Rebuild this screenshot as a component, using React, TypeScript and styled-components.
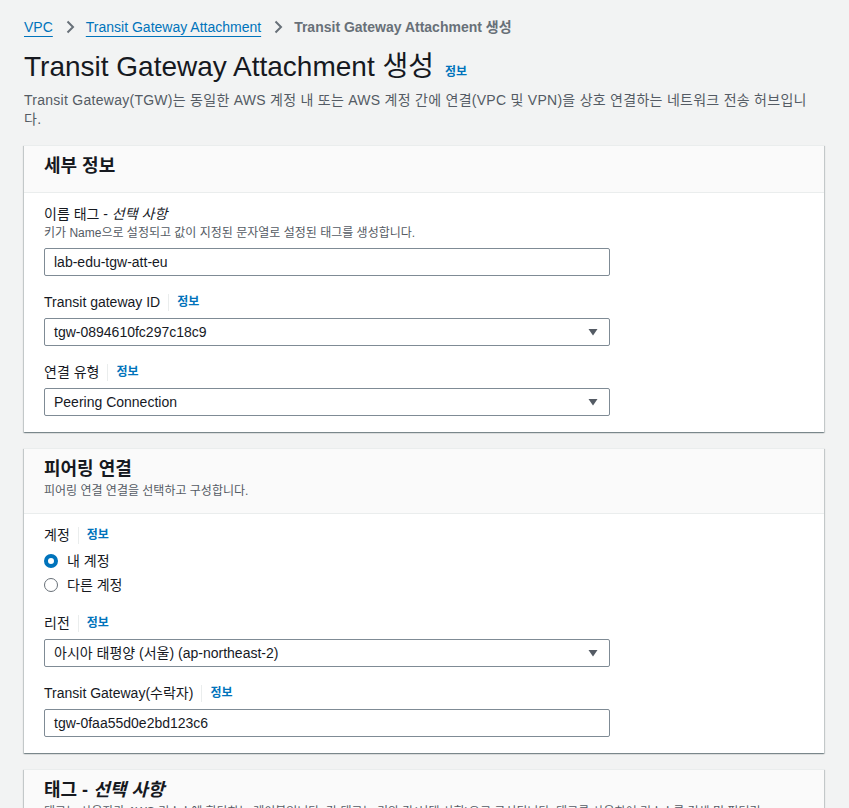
import React from "react";
import styled, { createGlobalStyle } from "styled-components";

const GlobalStyle = createGlobalStyle`
  html, body {
    margin: 0;
    padding: 0;
    background: #f2f3f3;
  }
  body {
    font-family: "Liberation Sans", "Noto Sans CJK KR", sans-serif;
    color: #16191f;
    font-size: 14px;
    line-height: 20px;
  }
  * { box-sizing: border-box; }
`;

const Page = styled.div`
  padding: 17px 25px 40px 24px;
`;

const Breadcrumbs = styled.nav`
  display: flex;
  align-items: center;
  height: 20px;
  font-size: 14px;
`;

const Crumb = styled.a`
  color: #0073bb;
  text-decoration: underline;
  text-underline-offset: 4px;
  text-decoration-thickness: 1px;
`;

const CurrentCrumb = styled.span`
  color: #687078;
  font-weight: 700;
`;

const Chevron = styled.svg`
  width: 16px;
  height: 16px;
  margin: 0 8px 0 9px;
  flex: none;
`;

const TitleRow = styled.div`
  display: flex;
  align-items: baseline;
  margin-top: 12px;
`;

const Title = styled.h1`
  margin: 0;
  font-size: 28px;
  line-height: 36px;
  font-weight: 400;
`;

const InfoLink = styled.a`
  color: #0073bb;
  font-size: 12px;
  font-weight: 700;
  line-height: 16px;
  text-decoration: none;
`;

const TitleInfo = styled(InfoLink)`
  margin-left: 11px;
`;

const Description = styled.p`
  margin: 6px 0 0;
  max-width: 788px;
  color: #545b64;
  font-size: 14px;
  line-height: 19px;
  letter-spacing: 0.27px;
`;

const Stack = styled.div`
  display: flex;
  flex-direction: column;
  gap: 16px;
  margin-top: 16px;
`;

const Container = styled.section`
  background: #ffffff;
  box-shadow: 0 1px 1px 0 rgba(0, 28, 36, 0.3), 1px 1px 1px 0 rgba(0, 28, 36, 0.15),
    -1px 1px 1px 0 rgba(0, 28, 36, 0.15);
  border-top: 1px solid #eaeded;
`;

const Header = styled.div`
  background: #fafafa;
  border-bottom: 1px solid #eaeded;
  padding: 8px 20px 14px;
`;

const HeaderTitle = styled.h2`
  margin: 0;
  font-size: 18px;
  line-height: 24px;
  font-weight: 700;
`;

const HeaderDesc = styled.p`
  margin: 2px 0 0;
  font-size: 12px;
  line-height: 16px;
  color: #545b64;
  white-space: nowrap;
  overflow: hidden;
`;

const Body = styled.div`
  padding: 11px 20px 16px;
  display: flex;
  flex-direction: column;
  gap: 16px;
`;

const Field = styled.div`
  display: flex;
  flex-direction: column;
`;

const LabelRow = styled.div`
  display: flex;
  align-items: center;
  height: 20px;
`;

const Label = styled.label`
  font-size: 14px;
  line-height: 20px;
  color: #16191f;
`;

const Divider = styled.span`
  width: 1px;
  height: 17px;
  background: #eaeded;
  margin: 0 8px;
`;

const FieldDesc = styled.div`
  font-size: 12px;
  line-height: 16px;
  color: #545b64;
  margin-top: 1px;
`;

const Control = styled.div<{ $gap?: number }>`
  margin-top: ${(p) => p.$gap ?? 6}px;
  width: 566px;
  height: 28px;
  border: 1px solid #7f8b95;
  border-radius: 2px;
  background: #ffffff;
  display: flex;
  align-items: center;
  padding: 0 8px 0 9px;
  font-size: 14px;
  color: #16191f;
`;

const ControlText = styled.span`
  flex: 1;
  white-space: nowrap;
`;

const Caret = styled.svg`
  width: 16px;
  height: 16px;
  flex: none;
`;

const RadioGroup = styled.div`
  display: flex;
  flex-direction: column;
  margin-top: 4px;
`;

const RadioRow = styled.div`
  display: flex;
  align-items: center;
  height: 24px;
  gap: 9px;
`;

const RadioDot = styled.span<{ $checked?: boolean }>`
  width: 14px;
  height: 14px;
  border-radius: 50%;
  flex: none;
  background: #ffffff;
  border: ${(p) => (p.$checked ? "4px solid #0073bb" : "1.5px solid #687078")};
`;

const Italic = styled.i`
  font-style: italic;
`;

const InfoLabel: React.FC<{ label: React.ReactNode }> = ({ label }) => (
  <LabelRow>
    <Label>{label}</Label>
    <Divider />
    <InfoLink href="#">정보</InfoLink>
  </LabelRow>
);

const SelectBox: React.FC<{ value: string }> = ({ value }) => (
  <Control>
    <ControlText>{value}</ControlText>
    <Caret viewBox="0 0 16 16">
      <path d="M3.5 5h9L8 11.5z" fill="#545b64" />
    </Caret>
  </Control>
);

const ChevronIcon = () => (
  <Chevron viewBox="0 0 16 16">
    <path d="M5.5 2.5l5.5 5.5-5.5 5.5" fill="none" stroke="#687078" strokeWidth="2" />
  </Chevron>
);

export default function App() {
  return (
    <>
      <GlobalStyle />
      <Page>
        <Breadcrumbs>
          <Crumb href="#">VPC</Crumb>
          <ChevronIcon />
          <Crumb href="#">Transit Gateway Attachment</Crumb>
          <ChevronIcon />
          <CurrentCrumb>Transit Gateway Attachment 생성</CurrentCrumb>
        </Breadcrumbs>

        <TitleRow>
          <Title>Transit Gateway Attachment 생성</Title>
          <TitleInfo href="#">정보</TitleInfo>
        </TitleRow>
        <Description>
          Transit Gateway(TGW)는 동일한 AWS 계정 내 또는 AWS 계정 간에 연결(VPC 및 VPN)을 상호 연결하는 네트워크 전송 허브입니다.
        </Description>

        <Stack>
          <Container>
            <Header>
              <HeaderTitle>세부 정보</HeaderTitle>
            </Header>
            <Body>
              <Field>
                <LabelRow>
                  <Label>
                    이름 태그 - <Italic>선택 사항</Italic>
                  </Label>
                </LabelRow>
                <FieldDesc>키가 Name으로 설정되고 값이 지정된 문자열로 설정된 태그를 생성합니다.</FieldDesc>
                <Control $gap={7}>
                  <ControlText>lab-edu-tgw-att-eu</ControlText>
                </Control>
              </Field>
              <Field>
                <InfoLabel label="Transit gateway ID" />
                <SelectBox value="tgw-0894610fc297c18c9" />
              </Field>
              <Field>
                <InfoLabel label="연결 유형" />
                <SelectBox value="Peering Connection" />
              </Field>
            </Body>
          </Container>

          <Container>
            <Header>
              <HeaderTitle>피어링 연결</HeaderTitle>
              <HeaderDesc>피어링 연결 연결을 선택하고 구성합니다.</HeaderDesc>
            </Header>
            <Body>
              <Field>
                <InfoLabel label="계정" />
                <RadioGroup>
                  <RadioRow>
                    <RadioDot $checked />
                    <Label>내 계정</Label>
                  </RadioRow>
                  <RadioRow>
                    <RadioDot />
                    <Label>다른 계정</Label>
                  </RadioRow>
                </RadioGroup>
              </Field>
              <Field>
                <InfoLabel label="리전" />
                <SelectBox value="아시아 태평양 (서울) (ap-northeast-2)" />
              </Field>
              <Field>
                <InfoLabel label="Transit Gateway(수락자)" />
                <Control>
                  <ControlText>tgw-0faa55d0e2bd123c6</ControlText>
                </Control>
              </Field>
            </Body>
          </Container>

          <Container>
            <Header>
              <HeaderTitle>
                태그 - <Italic>선택 사항</Italic>
              </HeaderTitle>
              <HeaderDesc>
                태그는 사용자가 AWS 리소스에 할당하는 레이블입니다. 각 태그는 키와 값(선택 사항)으로 구성됩니다. 태그를 사용하여 리소스를 검색 및 필터링
              </HeaderDesc>
            </Header>
            <Body>
              <FieldDesc>리소스와 연결된 태그가 없습니다.</FieldDesc>
            </Body>
          </Container>
        </Stack>
      </Page>
    </>
  );
}
